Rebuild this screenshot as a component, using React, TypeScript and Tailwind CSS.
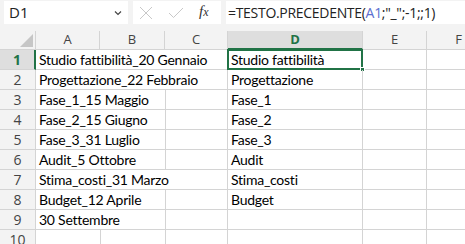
import React from "react";

const cols = [
  { k: "A", w: 64 },
  { k: "B", w: 65 },
  { k: "C", w: 63 },
  { k: "D", w: 135 },
  { k: "E", w: 64 },
  { k: "F", w: 64 },
];

const dataA = [
  "Studio fattibilità_20 Gennaio",
  "Progettazione_22 Febbraio",
  "Fase_1_15 Maggio",
  "Fase_2_15 Giugno",
  "Fase_3_31 Luglio",
  "Audit_5 Ottobre",
  "Stima_costi_31 Marzo",
  "Budget_12 Aprile",
  "30 Settembre",
  "",
];
const longRows = [0, 1, 6];
const dataD = [
  "Studio fattibilità",
  "Progettazione",
  "Fase_1",
  "Fase_2",
  "Fase_3",
  "Audit",
  "Stima_costi",
  "Budget",
  "",
  "",
];

const cellFont = { fontFamily: "Lato, 'Open Sans', sans-serif", letterSpacing: "-0.25px" };

export default function App() {
  return (
    <div className="w-[465px] h-[244px] overflow-hidden bg-[#f3f3f3] relative">
      {/* top bar */}
      <div className="flex items-start h-[31px] pt-[1px]">
        <div className="ml-[4px] w-[124px] h-[23px] bg-white flex items-center justify-between pl-[5px] pr-[6px]">
          <span className="text-[15px] text-[#222]" style={{ fontFamily: "'Open Sans', sans-serif" }}>D1</span>
          <svg width="8" height="6" viewBox="0 0 8 6"><path d="M1 1.5 L4 4.5 L7 1.5" stroke="#444" strokeWidth="1.2" fill="none" /></svg>
        </div>
        <div className="ml-[5px] w-[88px] h-[23px] bg-white flex items-center pl-[6px] gap-[15px]">
          <svg width="14" height="14" viewBox="0 0 14 14"><path d="M1 1 L13 13 M13 1 L1 13" stroke="#c8c8c8" strokeWidth="1" fill="none" /></svg>
          <svg width="16" height="12" viewBox="0 0 16 12"><path d="M1 6 L5.5 10.5 L15 1" stroke="#c8c8c8" strokeWidth="1" fill="none" /></svg>
          <span className="text-[15px] italic text-[#333] -mt-[2px]" style={{ fontFamily: "'Liberation Serif', serif" }}>
            f<span className="text-[12px]">x</span>
          </span>
        </div>
        <div className="ml-[5px] flex-1 h-[23px] bg-white flex items-center pl-[2px]">
          <span className="text-[14px] text-[#222] whitespace-nowrap" style={{ fontFamily: "'Open Sans', sans-serif", letterSpacing: "-0.3px" }}>
            =TESTO.PRECEDENTE(<span className="text-[#5b6fd0]">A1</span>;"_";-1;;1)
          </span>
        </div>
      </div>

      {/* grid */}
      <div className="grid bg-white" style={{ gridTemplateColumns: "36px " + cols.map((c) => c.w + "px").join(" ") }}>
        <div className="h-[19px] bg-[#f3f3f3] border-r border-b border-[#d4d4d4] relative">
          <svg className="absolute right-[2px] bottom-[2px]" width="13" height="13" viewBox="0 0 13 13"><path d="M13 0 L13 13 L0 13 Z" fill="#c6c6c6" /></svg>
        </div>
        {cols.map((c) => (
          <div
            key={c.k}
            className={
              "h-[19px] border-r border-b flex items-center justify-center text-[13px] " +
              (c.k === "D"
                ? "bg-[#dedede] text-[#217346] font-bold border-b-[#217346] border-b-2 border-r-[#d4d4d4]"
                : "bg-[#f3f3f3] text-[#444] border-[#d4d4d4]")
            }
            style={{ fontFamily: "'Open Sans', sans-serif" }}
          >
            {c.k}
          </div>
        ))}
        {dataA.map((a, i) => {
          const empty = a === "";
          const long = longRows.includes(i);
          return (
            <React.Fragment key={i}>
              <div
                className={
                  "h-[20px] flex items-center justify-center text-[14px] border-b border-[#d4d4d4] " +
                  (i === 0
                    ? "bg-[#dedede] text-[#217346] font-bold border-r-2 border-r-[#217346]"
                    : "bg-[#f3f3f3] text-[#444] border-r")
                }
                style={{ fontFamily: "'Open Sans', sans-serif" }}
              >
                {i + 1}
              </div>
              <div className="h-[20px] border-b border-[#d4d4d4] relative">
                <span className="absolute left-[3px] top-0 text-[14px] leading-[20px] text-black whitespace-nowrap z-10" style={cellFont}>
                  {a}
                </span>
              </div>
              <div className={"h-[20px] border-b border-[#d4d4d4] " + (empty ? "border-l" : "")}></div>
              <div className={"h-[20px] border-b border-r border-[#d4d4d4] " + (long ? "" : "border-l")}></div>
              <div className="h-[20px] border-b border-r border-[#d4d4d4] relative">
                <span className="absolute left-[3px] top-0 text-[14px] leading-[20px] text-black whitespace-nowrap" style={cellFont}>
                  {dataD[i]}
                </span>
                {i === 0 && (
                  <>
                    <div className="absolute -left-[1px] -top-[1px] -right-[1px] -bottom-[1px] border-2 border-[#217346]"></div>
                    <div className="absolute -right-[3px] -bottom-[3px] w-[5px] h-[5px] bg-[#217346] border border-white"></div>
                  </>
                )}
              </div>
              <div className="h-[20px] border-b border-r border-[#d4d4d4]"></div>
              <div className="h-[20px] border-b border-r border-[#d4d4d4]"></div>
            </React.Fragment>
          );
        })}
      </div>
    </div>
  );
}
